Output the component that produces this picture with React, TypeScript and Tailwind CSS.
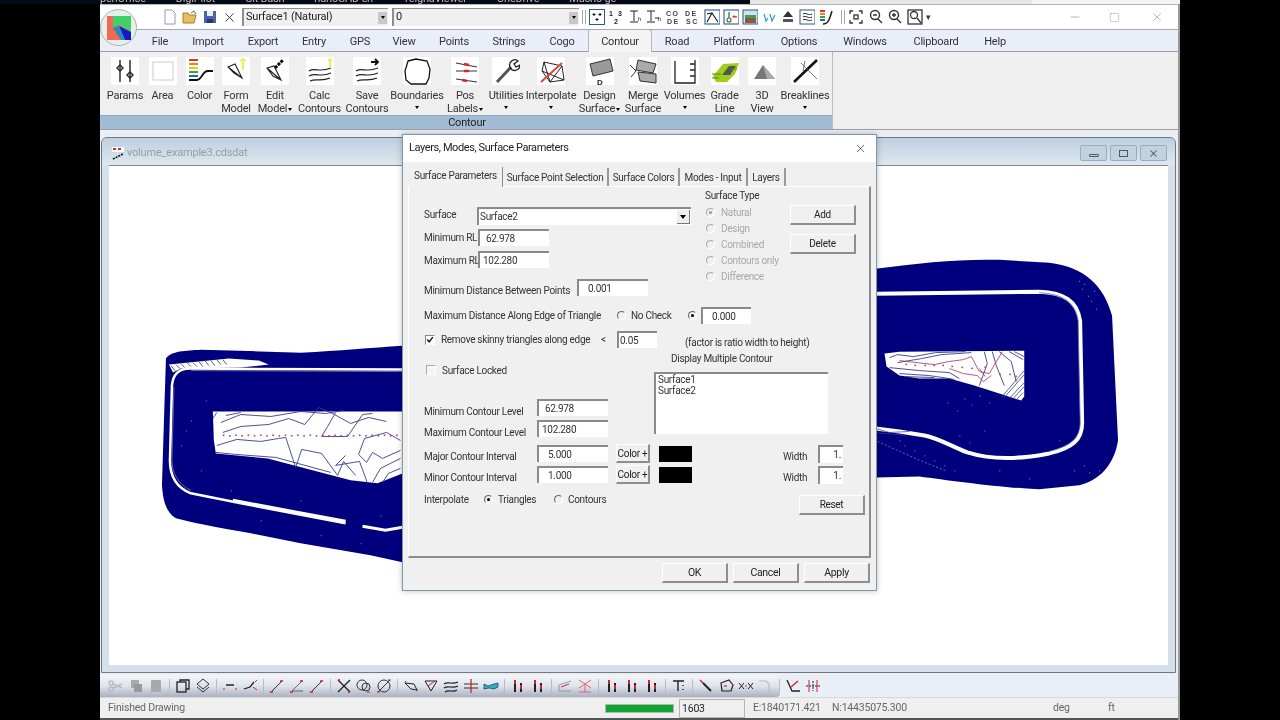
import type { ReactNode } from "react";
import { Minus, Square, X } from "lucide-react";

// ribbon icons
const ribbonIcons: Record<string, ReactNode> = {
  params: (
    <g stroke="#222" fill="none" strokeWidth="1.4">
      <path d="M9 3v22M19 3v22" />
      <path d="M9 8l3 3-3 3-3-3zM19 15l3 3-3 3-3-3z" />
    </g>
  ),
  area: <rect x="4" y="5" width="20" height="18" fill="#fff" stroke="#ccc" />,
  color: (
    <g fill="none">
      <path d="M3 3h9" stroke="#d33" strokeWidth="2" />
      <path d="M3 7h9" stroke="#e80" strokeWidth="2" />
      <path d="M3 11h9" stroke="#dc2" strokeWidth="2" />
      <path d="M3 15h9" stroke="#3a3" strokeWidth="2" />
      <path d="M3 19h9" stroke="#26c" strokeWidth="2" />
      <path d="M3 23h8c5 0 5-9 11-9h5" stroke="#111" strokeWidth="1.8" />
    </g>
  ),
  form: (
    <g fill="none">
      <path d="M6 10l7-3 7 14-8-5zM6 10l14 11" stroke="#222" strokeWidth="1.1" />
      <path d="M21 1v12M18 4l3-2 3 2" stroke="#ee6" strokeWidth="2" />
    </g>
  ),
  edit: (
    <g fill="none">
      <path d="M6 11l7-2 7 14-8-4zM6 11l14 12" stroke="#222" strokeWidth="1.1" />
      <path d="M14 11l8-8" stroke="#111" strokeWidth="3" strokeDasharray="3 1" />
    </g>
  ),
  calc: (
    <g fill="none" stroke="#222" strokeWidth="1.2">
      <path d="M3 14c6-4 10 2 22-3M3 19c7-4 11 2 22-3M4 24c6-3 11 1 20-3" />
      <path d="M24 2v9M22 4l2-2 2 2" stroke="#ee6" strokeWidth="2" />
    </g>
  ),
  save: (
    <g fill="none" stroke="#222" strokeWidth="1.2">
      <path d="M3 14c6-4 10 2 22-3M3 19c7-4 11 2 22-3M4 24c6-3 11 1 20-3" />
      <path d="M18 5h7M22 2l3 3-3 3" stroke="#111" strokeWidth="1.8" />
    </g>
  ),
  boundaries: (
    <path
      d="M5 4l8-2 11 2 3 8-1 9-3 6H8l-5-4-1-9z"
      fill="none"
      stroke="#111"
      strokeWidth="1.3"
    />
  ),
  pos: (
    <g fill="none" stroke="#333" strokeWidth="1.1">
      <path d="M5 6l21 4M5 14l21 0M5 22l21 3" />
      <path d="M13 7l5 1M13 14h5M11 23l5 1" stroke="#d22" strokeWidth="2.6" />
    </g>
  ),
  utilities: (
    <g fill="none">
      <path d="M5 25L19 10" stroke="#555" strokeWidth="3" />
      <path d="M18 10c-2-6 5-9 8-6l-4 3 2 3 4-2c0 5-6 7-9 4z" stroke="#222" strokeWidth="1.3" />
    </g>
  ),
  interpolate: (
    <g fill="none">
      <path d="M7 5l18 4 2 14-14 2-8-11zM7 5l6 20M5 14l22 9M25 9L13 25" stroke="#222" strokeWidth="1" />
      <path d="M4 25L25 6" stroke="#d44" strokeWidth="2" />
    </g>
  ),
  design: (
    <g>
      <path d="M4 7l20-5 3 12-20 5z" fill="#999" stroke="#333" />
      <text x="11" y="28" fontSize="8" fontWeight="700" fill="#222" fontFamily="Liberation Sans">D</text>
    </g>
  ),
  merge: (
    <g fill="#aaa" stroke="#333">
      <path d="M9 3l18 4-3 9-17-3z" />
      <path d="M9 15l18 2 0 9-16-2z" />
      <path d="M1 8l6 6-5 6" fill="none" />
    </g>
  ),
  volumes: <path d="M4 4v22h20V3M24 7h-5M24 13h-5M24 19h-5" fill="none" stroke="#222" strokeWidth="1.3" />,
  grade: (
    <g>
      <path d="M2 19l10-12 16-1-4 11-8 8H5z" fill="#9bcf1b" />
      <path d="M11 18l7-9h7l-6 9z" fill="#555" />
      <path d="M1 17h9M1 21h7M20 12h6" stroke="#5a8a10" />
    </g>
  ),
  view3d: (
    <g>
      <path d="M6 22l9-14 12 14z" fill="#777" />
      <path d="M15 8l4 14h8z" fill="#aaa" />
    </g>
  ),
  breaklines: (
    <g fill="none">
      <path d="M3 25L26 3" stroke="#111" strokeWidth="2.6" />
      <path d="M10 6l16 16M14 4l-2 10" stroke="#555" strokeWidth="0.8" />
    </g>
  ),
};

const ribbonTools = [
  { w: 38, icon: "params", lines: ["Params"] },
  { w: 37, icon: "area", lines: ["Area"] },
  { w: 37, icon: "color", lines: ["Color"] },
  { w: 36, icon: "form", lines: ["Form", "Model"] },
  { w: 42, icon: "edit", lines: ["Edit", "Model"], caret: "inline" },
  { w: 47, icon: "calc", lines: ["Calc", "Contours"] },
  { w: 48, icon: "save", lines: ["Save", "Contours"] },
  { w: 52, icon: "boundaries", lines: ["Boundaries"], caret: "below" },
  { w: 44, icon: "pos", lines: ["Pos", "Labels"], caret: "inline" },
  { w: 38, icon: "utilities", lines: ["Utilities"], caret: "below" },
  { w: 52, icon: "interpolate", lines: ["Interpolate"], caret: "below" },
  { w: 45, icon: "design", lines: ["Design", "Surface"], caret: "inline" },
  { w: 42, icon: "merge", lines: ["Merge", "Surface"] },
  { w: 41, icon: "volumes", lines: ["Volumes"], caret: "below" },
  { w: 39, icon: "grade", lines: ["Grade", "Line"] },
  { w: 36, icon: "view3d", lines: ["3D", "View"] },
  { w: 50, icon: "breaklines", lines: ["Breaklines"], caret: "below" },
];

const menuItems: [string, number][] = [
  ["File", 40], ["Import", 56], ["Export", 54], ["Entry", 48], ["GPS", 44], ["View", 44],
  ["Points", 56], ["Strings", 54], ["Cogo", 52], ["Contour", 64], ["Road", 50], ["Platform", 64],
  ["Options", 66], ["Windows", 66], ["Clipboard", 76], ["Help", 42],
];

function Caret() {
  return <span className="inline-block w-0 h-0 border-x-[2.5px] border-x-transparent border-t-[3px] border-t-black align-middle" />;
}

function RibbonTool({ tool }: { tool: (typeof ribbonTools)[number] }) {
  return (
    <div className="flex flex-col items-center shrink-0" style={{ width: tool.w }}>
      <div className="w-[28px] h-[28px] bg-white mt-[5px] shrink-0">
        <svg viewBox="0 0 28 28" className="w-[28px] h-[28px]">
          {ribbonIcons[tool.icon]}
        </svg>
      </div>
      <div className="mt-[4px] text-[11px] leading-[13px] text-[#333] text-center whitespace-nowrap">
        {tool.lines.map((l, i) => (
          <div key={l}>
            {l}
            {tool.caret === "inline" && i === tool.lines.length - 1 && <span className="ml-[1px]"><Caret /></span>}
          </div>
        ))}
        {tool.caret === "below" && <div className="h-[13px] leading-[10px]"><Caret /></div>}
      </div>
    </div>
  );
}

// little bevelled field, the way the old dialog draws its edits
function Field({ w, h = 17, children, className = "" }: { w: number; h?: number; children?: ReactNode; className?: string }) {
  return (
    <div
      className={`bg-white border-t-2 border-l-2 border-t-[#8a8a8a] border-l-[#8a8a8a] text-[#333] text-[10px] leading-none flex items-center shrink-0 ${className}`}
      style={{ width: w, height: h }}
    >
      {children}
    </div>
  );
}

function Btn({ w, h = 20, children, className = "" }: { w: number; h?: number; children: ReactNode; className?: string }) {
  return (
    <div
      className={`bg-[#f0f0f0] border-r-2 border-b-2 border-r-[#8e8e8e] border-b-[#8e8e8e] border-t border-l border-t-white border-l-white text-[#222] text-[10px] whitespace-nowrap flex items-center justify-center shrink-0 ${className}`}
      style={{ width: w, height: h }}
    >
      {children}
    </div>
  );
}

function Radio({ on, disabled }: { on?: boolean; disabled?: boolean }) {
  return (
    <span
      className={`inline-flex items-center justify-center w-[9px] h-[9px] rounded-full border border-b-white border-r-white shrink-0 ${disabled ? "border-[#aaa] border-b-white border-r-white" : "border-[#666] border-b-white border-r-white"}`}
    >
      {on && <span className={`w-[3px] h-[3px] rounded-full ${disabled ? "bg-[#999]" : "bg-black"}`} />}
    </span>
  );
}

function Label({ w, children, className = "" }: { w?: number; children: ReactNode; className?: string }) {
  return (
    <span className={`text-[10px] text-[#333] whitespace-nowrap shrink-0 ${className}`} style={w ? { width: w } : undefined}>
      {children}
    </span>
  );
}

function LayersDialog() {
  return (
    <div className="absolute left-[402px] top-[134px] w-[475px] h-[457px] border border-[#7f98a8] bg-[#f0f0f0] flex flex-col shadow-[0_0_6px_rgba(0,0,0,0.25)] z-10 tracking-[-0.3px]">
      <div className="h-[27px] shrink-0 bg-white flex items-center justify-between pl-[6px] pr-[9px]">
        <span className="text-[11px] text-[#222] tracking-[-0.4px]">Layers, Modes, Surface Parameters</span>
        <X size={13} strokeWidth={1.2} className="text-[#222]" />
      </div>

      {/* tab strip */}
      <div className="h-[24px] shrink-0 flex items-end pl-[6px] text-[10px] text-[#333] whitespace-nowrap">
        <div className="w-[94px] h-[20px] mb-[-1px] pb-[3px] flex items-center justify-center bg-[#f0f0f0] border-r border-[#888] z-10">Surface Parameters</div>
        <div className="w-[106px] h-[18px] flex items-center justify-center border-r-2 border-[#999]">Surface Point Selection</div>
        <div className="w-[71px] h-[18px] flex items-center justify-center border-r-2 border-[#999]">Surface Colors</div>
        <div className="w-[68px] h-[18px] flex items-center justify-center border-r-2 border-[#999]">Modes - Input</div>
        <div className="w-[38px] h-[18px] flex items-center justify-center border-r-2 border-[#999]">Layers</div>
      </div>

      {/* tab page */}
      <div className="ml-[5px] w-[463px] h-[372px] shrink-0 border-r-2 border-b-2 border-[#8c8c8c] border-t border-t-white border-l border-l-white pl-[15px] relative">
        <div className="flex h-[89px]">
          <div className="w-[281px] flex flex-col shrink-0">
            <div className="flex items-center h-[18px] mt-[20px]">
              <Label w={53} className="mb-[4px]">Surface</Label>
              <Field w={214} h={18} className="justify-between pl-[1px] pr-[1px]">
                Surface2
                <span className="w-[13px] h-[14px] bg-[#eee] border-r border-b border-[#777] flex items-center justify-center">
                  <span className="w-0 h-0 border-x-[3.5px] border-x-transparent border-t-[4px] border-t-black" />
                </span>
              </Field>
            </div>
            <div className="flex items-center h-[17px] mt-[4px]">
              <Label w={54}>Minimum RL</Label>
              <Field w={71} className="pl-[6px]">62.978</Field>
            </div>
            <div className="flex items-center h-[17px] mt-[5px]">
              <Label w={54} className="mt-[2px]">Maximum RL</Label>
              <Field w={71} className="pl-[3px]">102.280</Field>
            </div>
          </div>
          <div className="w-[85px] shrink-0 flex flex-col">
            <Label className="h-[16px] leading-[16px] mt-[1px]">Surface Type</Label>
            <div className="flex flex-col mt-[1px]">
              {["Natural", "Design", "Combined", "Contours only", "Difference"].map((s, i) => (
                <div key={s} className="flex items-center gap-[6px] h-[15.8px] pl-[1px]">
                  <Radio on={i === 0} disabled />
                  <span className="text-[10px] text-[#a8a8a8] whitespace-nowrap">{s}</span>
                </div>
              ))}
            </div>
          </div>
          <div className="flex flex-col gap-[9px] mt-[18px]">
            <Btn w={66}>Add</Btn>
            <Btn w={66}>Delete</Btn>
          </div>
        </div>

        <div className="flex items-center h-[17px] mt-[3px]">
          <Label w={153} className="mt-[6px]">Minimum Distance Between Points</Label>
          <Field w={71} className="pl-[9px]">0.001</Field>
        </div>

        <div className="flex items-center h-[17px] mt-[11px]">
          <Label w={193}>Maximum Distance Along Edge of Triangle</Label>
          <Radio />
          <Label className="ml-[5px] w-[57px]">No Check</Label>
          <Radio on />
          <Field w={50} className="ml-[4px] pl-[9px]">0.000</Field>
        </div>

        <div className="flex items-center h-[17px] mt-[7px]">
          <span className="w-[10px] h-[10px] bg-white border border-[#888] border-b-white border-r-white flex items-center justify-center shrink-0 ml-[1px] mr-[6px]">
            <svg viewBox="0 0 10 10" className="w-[9px] h-[9px]"><path d="M1.5 5l2.5 3 4.5-6" fill="none" stroke="#111" strokeWidth="1.8" /></svg>
          </span>
          <Label w={160}>Remove skinny triangles along edge</Label>
          <Label w={16}>&lt;</Label>
          <Field w={40} className="pl-[1px]">0.05</Field>
          <Label className="ml-[28px] mt-[6px]">(factor is ratio width to height)</Label>
        </div>

        <div className="flex h-[94px] mt-[3px]">
          <div className="w-[230px] shrink-0 flex flex-col">
            <div className="flex items-center h-[14px] mt-[12px]">
              <span className="w-[10px] h-[10px] bg-[#f6f6f6] border border-[#aaa] border-b-white border-r-white shrink-0 ml-[2px] mr-[6px]" />
              <Label>Surface Locked</Label>
            </div>
            <div className="flex items-center h-[17px] mt-[22px]">
              <Label w={113} className="mt-[8px]">Minimum Contour Level</Label>
              <Field w={71} className="pl-[6px]">62.978</Field>
            </div>
            <div className="flex items-center h-[17px] mt-[4px]">
              <Label w={113} className="mt-[8px]">Maximum Contour Level</Label>
              <Field w={71} className="pl-[3px]">102.280</Field>
            </div>
          </div>
          <div className="flex flex-col">
            <div className="h-[14px] leading-[14px] text-[10px] text-[#333] pl-[17px] mt-[1px] mb-[6px] whitespace-nowrap">Display Multiple Contour</div>
            <div className="w-[174px] h-[62px] bg-white border-t-2 border-l-2 border-[#8a8a8a] pl-[2px] text-[10px] leading-[11px] text-[#333]">
              <div>Surface1</div>
              <div>Surface2</div>
            </div>
          </div>
        </div>

        <div className="flex items-center h-[19px] mt-[-1px]">
          <Label w={113} className="mt-[6px]">Major Contour Interval</Label>
          <Field w={71} className="pl-[9px]">5.000</Field>
          <Btn w={34} h={19} className="ml-[8px]">Color +</Btn>
          <div className="w-[33px] h-[16px] bg-black ml-[9px] shrink-0" />
          <Label w={35} className="ml-[91px] mt-[6px]">Width</Label>
          <Field w={25} h={18} className="justify-end pr-[2px]">1.</Field>
        </div>
        <div className="flex items-center h-[19px] mt-[2px]">
          <Label w={113} className="mt-[6px]">Minor Contour Interval</Label>
          <Field w={71} className="pl-[9px]">1.000</Field>
          <Btn w={34} h={19} className="ml-[8px]">Color +</Btn>
          <div className="w-[33px] h-[16px] bg-black ml-[9px] shrink-0" />
          <Label w={35} className="ml-[91px] mt-[6px]">Width</Label>
          <Field w={25} h={18} className="justify-end pr-[2px]">1.</Field>
        </div>

        <div className="flex items-center h-[20px] mt-[5px]">
          <Label w={60}>Interpolate</Label>
          <Radio on />
          <Label w={56} className="ml-[5px]">Triangles</Label>
          <Radio />
          <Label w={231} className="ml-[5px]">Contours</Label>
          <Btn w={66} className="mt-[11px]">Reset</Btn>
        </div>
      </div>

      <div className="flex justify-end gap-[5px] pr-[6px] mt-[5px]">
        <Btn w={66}><span className="text-[10.5px]">OK</span></Btn>
        <Btn w={66}><span className="text-[10.5px]">Cancel</span></Btn>
        <Btn w={66}><span className="text-[10.5px]">Apply</span></Btn>
      </div>
    </div>
  );
}

// the two surfaces, drawn in screen coordinates
function SurfaceDrawing() {
  const redLeft = Array.from({ length: 30 }, (_, i) => [222 + i * 6.2, 434 + (i % 2) * 0.6]);
  const redRight = [[906, 363], [915, 364], [925, 364], [934, 364], [943, 364], [952, 365], [962, 366], [972, 367], [985, 366], [1000, 373], [1010, 373], [1016, 375]];
  const speckles = [
    [1085, 283], [1083, 288], [1089, 295], [1092, 300], [1080, 280], [1097, 308], [1095, 290], [1100, 470], [1090, 472], [1085, 465],
    [980, 395], [965, 398], [972, 404], [958, 410], [990, 402], [948, 402], [985, 430], [960, 435], [970, 442], [1060, 440],
    [900, 440], [905, 445], [915, 450], [925, 455], [935, 460], [945, 465], [955, 470], [1000, 470], [1030, 478], [1075, 470],
    [205, 400], [190, 420], [200, 470], [230, 490], [180, 445], [185, 430], [260, 520], [320, 535], [360, 543], [300, 500], [380, 515],
  ];
  return (
    <svg viewBox="109 165 1059 500" className="w-full h-full block">
      {/* left */}
      <path
        d="M165 358C170 350 185 350 200 349L300 352C340 350 370 347 402 345L402 562L370 555L300 543L250 533C215 527 190 522 175 518C165 512 162 500 161 485L163 420Z"
        fill="#00007e"
      />
      <path d="M168 364L228 358L258 360L268 364L240 367L180 368L172 372Z" fill="#fff" />
      <g fill="none" stroke="#334" strokeWidth="0.8">
        <path d="M170 365l4 5M175 364l4 4M180 363l4 4M186 362l4 4M192 362l4 4M198 361l4 5M204 360l4 5M210 360l4 5M216 359l4 5M222 359l4 5" />
      </g>
      <path d="M190 368L402 369" stroke="#fff" strokeWidth="2.5" fill="none" />
      <path d="M190 368C176 368 172 375 171 385L169 460C169 475 175 487 190 493L240 503L345 523" stroke="#fff" strokeWidth="2.5" fill="none" />
      <path d="M232 500L345 521" stroke="#fff" strokeWidth="3" fill="none" />
      <path d="M362 526L385 530L402 527" stroke="#fff" strokeWidth="3" fill="none" />
      <path d="M190 370L402 371M173 386L171 460C171 472 177 484 190 490" stroke="#7d7db8" strokeWidth="0.8" fill="none" />
      <path d="M212 411H402V473L377 483L350 480L267 458L215 453L213 440Z" fill="#fff" />
      <g fill="none" stroke="#3a3a8a" strokeWidth="0.9">
        <path d="M216 412l-4 6M225 415l15-3M220 422l20-8 30 2 30-5 25 2 18-3M222 432l18-6 28-2 20-6 16 6 14-17 14 6 18 10 18-6 18 4" />
        <path d="M216 445l20-6 24 2 18-3 7-1 10 30 6-18 20 4 16 22 6-14 12 14" />
        <path d="M215 452l20 2 40 3 55 15" />
        <path d="M335 412l-8 14-6 10 26 0 15-22 10-1" />
        <path d="M400 440l-14-8-22 6-6 16 8 8 6-10 10 6 18-8" />
        <path d="M345 455l-10 10 24 -4 8 22M400 458l-20 10-8 14M400 468l-12 5-6 9" />
      </g>
      <g fill="#b04060">
        {redLeft.map(([x, y]) => (
          <rect key={x} x={x} y={y} width="1.6" height="1.6" />
        ))}
      </g>

      {/* right */}
      <path
        d="M876 268C920 262 960 258 1000 259L1050 262C1085 266 1105 285 1113 315L1119 440C1115 465 1100 480 1080 485L1040 489C1000 487 950 480 920 476L876 477Z"
        fill="#00007e"
      />
      <path
        d="M876 293L960 292L1040 291C1065 292 1078 300 1081 320L1083 420C1084 440 1072 448 1050 453C1020 459 990 459 968 452C950 445 940 438 925 435L900 431L876 428"
        fill="none"
        stroke="#fff"
        strokeWidth="4"
      />
      <path
        d="M1040 292C1063 293 1076 301 1079 320L1081 420C1082 438 1070 446 1050 451"
        fill="none"
        stroke="#6a6ab0"
        strokeWidth="0.8"
      />
      <path d="M885 353l15-2 125-1v46l-3 4-22-7-25-8-25-7-30 0-20-3-13-9z" fill="#fff" />
      <g fill="none" stroke="#3a3a8a" strokeWidth="0.9">
        <path d="M890 357l8-3 16 2 22-4 30-1M898 362l24-4 20-4 30-2" />
        <path d="M890 367l30 3 30 2 10 6M900 373l30 2 20 3 5 1M905 376l30 1" />
        <path d="M985 351l3 12-8 22M993 351l4 14 8 20M1000 351l12 10 5 20M1010 351l14 8M1015 351l10 5" />
      </g>
      <g fill="none" stroke="#a03060" strokeWidth="0.8">
        <path d="M900 360l35 4 14-3 15-2 8-3 8 15 10 2 13-22M950 368l14 5 14 2 6 6 8-6M980 368l6 8" />
      </g>
      <path d="M1025 382l-15 16M1025 386l-12 13M1025 374l-20 23M1025 370l-23 27M1024 392l-7 7" stroke="#3a3a8a" strokeWidth="0.8" />
      <path d="M876 428l14 4 20-1M876 432l30 3" stroke="#3a3a8a" fill="none" strokeWidth="0.7" />
      <path d="M878 441l40 18 30 12" stroke="#8080c8" strokeWidth="0.8" strokeDasharray="2 2" fill="none" />
      <g fill="#b04060">
        {redRight.map(([x, y]) => (
          <rect key={x} x={x} y={y} width="1.6" height="1.6" />
        ))}
      </g>
      <g fill="#8a8ad0">
        {speckles.map(([x, y]) => (
          <rect key={`${x}-${y}`} x={x} y={y} width="1" height="1" />
        ))}
      </g>
    </svg>
  );
}

const topIcons: ReactNode[] = [
  <g fill="none"><rect x="0.5" y="0.5" width="15" height="15" stroke="#2b5a86" /><path d="M5 4v3M3.5 5.5h3M11 4v3M9.5 5.5h3M8 9v3M6.5 10.5h3" stroke="#111" /></g>,
  <g fill="#222"><text x="1" y="7" fontSize="7" fontFamily="Liberation Sans" fontWeight="700">1</text><text x="10" y="7" fontSize="7" fontFamily="Liberation Sans" fontWeight="700">3</text><text x="6" y="15" fontSize="7" fontFamily="Liberation Sans" fontWeight="700">2</text></g>,
  <g fill="none" stroke="#222"><path d="M3 2h8M7 2v10M3 13h8" /><text x="11" y="12" fontSize="6" fill="#222" stroke="none" fontFamily="Liberation Sans">h</text></g>,
  <g fill="none" stroke="#222"><path d="M1 2h8M5 2v10M1 13h8M9 9h4" /><text x="12" y="12" fontSize="6" fill="#222" stroke="none" fontFamily="Liberation Sans">h</text></g>,
  <g fill="#444" fontFamily="Liberation Sans" fontSize="7" fontWeight="700"><text x="1" y="7">C O</text><text x="2" y="15">D E</text></g>,
  <g fill="#444" fontFamily="Liberation Sans" fontSize="7" fontWeight="700"><text x="1" y="7">D E</text><text x="2" y="15">S C</text></g>,
  <g fill="none" stroke="#2b5a86" strokeWidth="1.1"><rect x="1" y="1" width="15" height="14" /><path d="M3 13l5-9 6 9M3 5l5-1" stroke="#111" /></g>,
  <g fill="none" stroke="#2b5a86" strokeWidth="1.1"><rect x="1" y="1" width="15" height="14" /><circle cx="6" cy="11" r="2" stroke="#555" /><path d="M6 9V3" stroke="#393" strokeWidth="1.5" /><path d="M11 7l3 1h-4z" stroke="#d33" /></g>,
  <g><rect x="1" y="1" width="15" height="14" fill="#cfe3ef" stroke="#2b5a86" /><rect x="3" y="9" width="11" height="5" fill="#8a5a3a" /><rect x="3" y="6" width="11" height="3" fill="#4a9a5a" /></g>,
  <g fill="none" stroke="#2aa0b8" strokeWidth="1.2"><path d="M3 5l2 7 2-3M9 5l2 7 3-6" /></g>,
  <g fill="#333"><path d="M8 2l5 6H3z" /><path d="M3 10h10v3H3z" fill="#555" /></g>,
  <g fill="none" stroke="#2b5a86"><rect x="1" y="1" width="15" height="14" /><path d="M4 5c3-2 5 2 9 0M4 8c3-2 5 2 9 0M4 11c3-2 5 2 9 0" stroke="#222" /></g>,
  <g fill="none"><path d="M2 2h5" stroke="#d33" strokeWidth="2" /><path d="M2 5h5" stroke="#e80" strokeWidth="2" /><path d="M2 8h5" stroke="#3a3" strokeWidth="2" /><path d="M2 11h5" stroke="#26c" strokeWidth="2" /><path d="M5 15c5 0 6-3 9-13" stroke="#111" strokeWidth="1.4" /></g>,
];

const zoomIcons: ReactNode[] = [
  <g fill="none" stroke="#333" strokeWidth="1.3"><path d="M2 5V2h3M11 2h3v3M14 11v3h-3M5 14H2v-3" /><rect x="6" y="6" width="4" height="4" /></g>,
  <g fill="none" stroke="#333" strokeWidth="1.4"><circle cx="7" cy="6" r="4.5" /><path d="M10 10l4 4M5 6h4" /></g>,
  <g fill="none" stroke="#333" strokeWidth="1.4"><circle cx="7" cy="6" r="4.5" /><path d="M10 10l4 4M5 6h4M7 4v4" /></g>,
  <g fill="none" stroke="#333" strokeWidth="1.3"><rect x="1" y="1" width="14" height="14" /><circle cx="7" cy="6" r="3.5" /><path d="M10 9l4 5" /></g>,
];

const Mini = ({ children }: { children: ReactNode }) => (
  <svg viewBox="0 0 16 16" className="w-[16px] h-[16px] shrink-0">{children}</svg>
);

const Sep = () => <span className="w-[1px] h-[14px] bg-[#bbb] shrink-0" />;

const R = "#c22";
const bottomIcons: Record<string, ReactNode> = {
  cut: <g fill="none" stroke="#bbb" strokeWidth="1.4"><circle cx="3" cy="5" r="2" /><circle cx="3" cy="11" r="2" /><path d="M5 6l9 4M5 10l9-4" /></g>,
  copy: <g fill="#a9a9a9"><rect x="3" y="2" width="8" height="8" /><rect x="6" y="6" width="8" height="8" fill="#999" /></g>,
  paste: <rect x="3" y="2" width="10" height="12" rx="1" fill="#a9a9a9" />,
  frame: <g fill="none" stroke="#222" strokeWidth="1.3"><rect x="2" y="4" width="9" height="10" /><path d="M5 4V2h9v9h-3" /></g>,
  diamond: <g fill="none" stroke="#333"><path d="M8 1l6 5-6 5-6-5z" /><path d="M2 9l6 5 6-5" /></g>,
  dash: <g><path d="M4 7h8" stroke="#222" strokeWidth="1.5" /><path d="M1 11h2M13 11h2" stroke={R} /></g>,
  poly: <g fill="none"><path d="M2 11l6-2 4-5" stroke="#222" strokeWidth="1.3" /><path d="M11 9l4 3M13 4l2-2" stroke={R} /></g>,
  line: <g fill="none"><path d="M3 13L13 3" stroke="#333" /><path d="M1 14h3M11 3h3" stroke={R} strokeWidth="1.5" /></g>,
  angle: <g fill="none"><path d="M3 13L13 3M3 13h11" stroke="#666" /><path d="M1 14h3M11 3h3" stroke={R} strokeWidth="1.5" /></g>,
  cross: <g fill="none"><path d="M2 2l12 12M14 2L2 14" stroke="#222" strokeWidth="1.4" /><path d="M2 2h2M12 14h2" stroke={R} strokeWidth="1.4" /></g>,
  circ: <g fill="none" stroke="#333"><circle cx="6" cy="7" r="5" /><circle cx="10" cy="9" r="4" /><path d="M11 14h3" stroke={R} /></g>,
  circ2: <g fill="none" stroke="#333"><circle cx="8" cy="8" r="6" /><path d="M2 14L14 2" /><path d="M1 14h3M12 2h3" stroke={R} /></g>,
  tri: <g fill="none" stroke="#222"><path d="M2 5l9 1 3 6-6-1z" /><path d="M2 5l1-2M13 13l2-1" stroke={R} /></g>,
  tri2: <g fill="none" stroke="#222"><path d="M2 3h12L8 13z" /><path d="M5 8l7-5" stroke={R} /></g>,
  wave: <path d="M1 6c4-3 8 1 14-2M1 10c4-3 8 1 14-2M2 14c4-3 8 1 12-2" fill="none" stroke="#222" strokeWidth="1.2" />,
  hash: <g fill="none"><path d="M1 6h14M1 10h14" stroke="#333" /><path d="M8 1v14" stroke={R} strokeWidth="1.3" /></g>,
  teal: <path d="M1 6l4 2 6-2 4-1v4l-4 2-5-1-5 1z" fill="#2ab5ba" stroke="#115" strokeWidth="0.6" />,
  pins: <g fill="none"><path d="M5 14V5" stroke="#222" strokeWidth="2" /><path d="M11 14V5" stroke="#222" strokeWidth="2" /><path d="M5 2v4M11 7v4" stroke={R} strokeWidth="2" /></g>,
  corner: <g fill="none"><path d="M2 13h12M2 13V7l12-4" stroke="#999" /><path d="M4 9l8-3" stroke={R} /></g>,
  star: <path d="M2 2l12 8M14 2L2 10M8 6v8M2 14h12" fill="none" stroke="#d66" />,
  tee: <g fill="none"><path d="M2 3h11M7 3v10" stroke="#222" strokeWidth="1.4" /><path d="M12 7v1M12 11v1" stroke="#222" strokeWidth="1.4" /></g>,
  arrowcut: <g fill="none"><path d="M5 5l8 8" stroke="#222" strokeWidth="2" /><path d="M2 2l3 3" stroke={R} strokeWidth="1.4" /></g>,
  blob: <g fill="none" stroke="#222" strokeWidth="1.2"><path d="M3 5l8-3 4 5-2 6H4z" /><path d="M6 8h3" stroke={R} /></g>,
  xs: <g fill="none" stroke="#222"><path d="M1 5l5 6M6 5l-5 6M10 5l5 6M15 5l-5 6" /><path d="M7 8h2" stroke={R} /></g>,
  step: <path d="M1 3h7l3 3v8" fill="none" stroke="#bbb" strokeWidth="1.2" />,
  slant: <g fill="none"><path d="M2 2l5 11h8" stroke="#222" strokeWidth="1.3" /><path d="M13 3L6 9" stroke={R} strokeWidth="1.3" /></g>,
  bars: <g fill="none"><path d="M4 2v12M12 2v12" stroke={R} /><path d="M8 3v10M1 8h14" stroke="#222" strokeDasharray="2 1" /></g>,
};

const bottomGroups = [
  ["cut", "copy", "paste"],
  ["frame", "diamond"],
  ["dash", "poly"],
  ["line", "angle", "line"],
  ["cross", "circ", "circ2"],
  ["tri", "tri2", "wave", "hash", "teal"],
  ["pins", "pins"],
  ["corner", "star"],
  ["pins", "pins", "pins"],
  ["tee"],
  ["arrowcut", "blob", "xs", "step"],
  ["slant", "bars"],
];

export default function App() {
  return (
    <div className="w-[1280px] h-[720px] bg-black overflow-hidden relative flex flex-col blur-[0.35px] tracking-[-0.2px] font-['Roboto','Noto_Sans',sans-serif]">
      {/* what shows of the desktop above the window */}
      <div className="h-[4px] shrink-0 flex overflow-hidden text-[11px] leading-none">
        <div className="w-[750px] bg-[#050a18] text-[#bbb] pl-[100px] flex gap-[30px] whitespace-nowrap overflow-hidden">
          <span className="-mt-[7px]">penOffice</span>
          <span className="-mt-[7px]">DigiPilot</span>
          <span className="-mt-[7px]">Git Bash</span>
          <span className="-mt-[7px]">nanoCAD en</span>
          <span className="-mt-[7px]">TeighaViewer</span>
          <span className="-mt-[7px]">OneDrive</span>
          <span className="-mt-[7px]">Mucho ge</span>
        </div>
        <div className="w-[282px] bg-[#e6e6e6]" />
        <div className="w-[148px] bg-[#f4f4f4]" />
        <div className="w-[100px] bg-black" />
      </div>

      <div className="ml-[100px] w-[1080px] h-[716px] shrink-0 bg-[#e9eef7] border-r-2 border-[#9a9a9a] flex flex-col relative">
        {/* app orb */}
        <div className="absolute left-0 top-[5px] w-[37px] h-[37px] rounded-full bg-[#e6efe9] border border-[#aab5aa] flex items-center justify-center z-10">
          <svg viewBox="0 0 24 24" className="w-[24px] h-[24px]">
            <rect width="24" height="24" fill="#ef6a55" />
            <path d="M6 0h18v16L12 9 6 12z" fill="#3fd06a" />
            <path d="M12 10l12 6v8H18z" fill="#1219c8" />
            <path d="M6 12l6-2 6 14h-4z" fill="#2b8ab8" />
          </svg>
        </div>

        {/* quick access row */}
        <div className="h-[26px] shrink-0 bg-white border-t border-[#b5b5b5] border-b border-b-[#a9a7b5] flex items-center relative">
          <div className="ml-[62px] flex items-center gap-[4px]">
            <svg viewBox="0 0 16 16" className="w-[16px] h-[16px]"><path d="M3 1h7l3 3v11H3z" fill="#fff" stroke="#99a" /></svg>
            <svg viewBox="0 0 16 16" className="w-[16px] h-[16px]"><path d="M1 4h5l1 2h7l-2 8H1z" fill="#e6bf62" stroke="#a57e25" /><path d="M9 4l3-2 2 3" fill="none" stroke="#4a7a30" /></svg>
            <svg viewBox="0 0 16 16" className="w-[16px] h-[16px]"><rect x="2" y="2" width="12" height="12" fill="#4b63a8" /><rect x="5" y="2" width="6" height="5" fill="#e8ecf5" /><rect x="5" y="10" width="6" height="4" fill="#27366b" /></svg>
            <X size={15} strokeWidth={1.6} className="text-[#444]" />
          </div>
          <div className="ml-[5px] w-[146px] h-[18px] bg-[#f0f0f0] border-l-2 border-t border-[#8e8e8e] flex items-center justify-between pl-[2px] pr-[1px] text-[11px] text-[#222]">
            Surface1 (Natural)
            <span className="w-[9px] h-[12px] bg-[#c8c8c8] flex items-center justify-center"><Caret /></span>
          </div>
          <div className="ml-[4px] w-[187px] h-[18px] bg-[#f0f0f0] border-l-2 border-t border-[#8e8e8e] flex items-center justify-between pl-[2px] pr-[1px] text-[11px] text-[#222]">
            0
            <span className="w-[9px] h-[12px] bg-[#c8c8c8] flex items-center justify-center"><Caret /></span>
          </div>
          <span className="ml-[3px] w-[4px] h-[14px] border-x border-[#aaa] shrink-0" />
          <div className="ml-[3px] flex items-center">
            <div className="flex items-center gap-[3.1px]">
              {topIcons.map((ic, i) => (
                <Mini key={i}>{ic}</Mini>
              ))}
            </div>
            <span className="ml-[7px] mr-[3px] w-[4px] h-[14px] border-x border-[#aaa] shrink-0" />
            <div className="flex items-center gap-[3.5px]">
              {zoomIcons.map((ic, i) => (
                <Mini key={i}>{ic}</Mini>
              ))}
            </div>
            <span className="ml-[3px] text-[9px] leading-none text-[#333]">▾</span>
          </div>
          <div className="absolute right-[14px] top-[5px] flex items-center text-[#888]">
            <Minus size={14} strokeWidth={1} />
            <Square size={11} strokeWidth={1} className="ml-[27px]" />
            <X size={14} strokeWidth={1} className="ml-[30px]" />
          </div>
        </div>

        {/* menu */}
        <div className="h-[22px] shrink-0 bg-[#e9eef8] border-b border-[#9a9ca6] flex pl-[40px] text-[11px] text-[#333]">
          {menuItems.map(([label, w]) => (
            <div
              key={label}
              className={`flex items-center justify-center shrink-0 pt-[3px] ${label === "Contour" ? "bg-[#f4f4f4] border border-b-0 border-[#b5b8c0] rounded-t-[3px] mt-[-1px] h-[23px]" : "h-[21px]"}`}
              style={{ width: w }}
            >
              {label}
            </div>
          ))}
        </div>

        {/* ribbon */}
        <div className="h-[78px] shrink-0 bg-[#efefef] border-b border-[#a0a0a0] flex">
          <div className="w-[733px] border-r border-[#b8bcc4] flex flex-col">
            <div className="h-[63px] flex pl-[6px] overflow-hidden">
              {ribbonTools.map((t) => (
                <RibbonTool key={t.icon} tool={t} />
              ))}
            </div>
            <div className="h-[14px] bg-[#a3bcd6] flex items-center justify-center text-[11px] text-[#222] pl-[2px] pt-[1px] border-t border-[#8fa8c4]">
              Contour
            </div>
          </div>
        </div>

        {/* document window */}
        <div className="mt-[7px] ml-[1px] w-[1075px] h-[536px] shrink-0 bg-[#d4e1ea] border border-[#777] rounded-t-[6px] flex flex-col">
          <div className="h-[27px] shrink-0 bg-gradient-to-b from-[#bccfe0] to-[#dde8ef] flex items-center justify-between pl-[9px] pr-[8px] pt-[3px] rounded-t-[6px]">
            <div className="flex items-center gap-[2px]">
              <svg viewBox="0 0 14 14" className="w-[14px] h-[14px]">
                <rect x="1" y="1" width="12" height="5" fill="#fff" />
                <rect x="2" y="2" width="3" height="2" fill="#c33" />
                <rect x="7" y="2" width="3" height="2" fill="#c33" />
                <path d="M2 13l10-5" stroke="#111" strokeWidth="1.6" strokeDasharray="2 1" />
              </svg>
              <span className="text-[11px] text-[#94a0a8]">volume_example3.cdsdat</span>
            </div>
            <div className="flex items-center gap-[3px]">
              {[
                <span key="min" className="w-[10px] h-[3px] border border-[#556] rounded-[1px] mt-[4px]" />,
                <span key="max" className="w-[9px] h-[7px] border border-[#556]" />,
                <X key="x" size={11} strokeWidth={2.2} className="text-[#556]" />,
              ].map((g, i) => (
                <span key={i} className="w-[27px] h-[16px] rounded-[2px] border border-[#98aebf] bg-[#c2d3df] flex items-center justify-center">{g}</span>
              ))}
            </div>
          </div>
          <div className="mx-[7px] h-[500px] shrink-0 bg-white border-t border-[#888]">
            <SurfaceDrawing />
          </div>
        </div>

        {/* bottom toolbar */}
        <div className="mt-[2px] h-[22px] shrink-0 flex">
          <div className="w-[680px] h-[22px] bg-gradient-to-b from-[#f3f5fa] via-[#dfe3ec] to-[#aab1c1] rounded-r-[4px] flex items-center pl-[8px] gap-[5px]">
            {bottomGroups.map((group, gi) => (
              <div key={gi} className="flex items-center gap-[5px]">
                {gi > 0 && <Sep />}
                <div className="flex items-center gap-[4px]">
                  {group.map((name, i) => (
                    <Mini key={i}>{bottomIcons[name]}</Mini>
                  ))}
                </div>
              </div>
            ))}
          </div>
        </div>

        {/* status bar */}
        <div className="h-[23px] shrink-0 bg-[#efefef] border-t border-[#d8d8d8] border-b-2 border-b-[#555] flex items-center text-[10.5px] text-[#666] relative">
          <span className="ml-[8px] w-[497px]">Finished Drawing</span>
          <div className="w-[69px] h-[9px] border border-[#b5b5b5] bg-[#0fa32f]" />
          <div className="ml-[5px] w-[66px] h-[19px] border border-[#b5b5b5] pl-[2px] leading-[17px] text-[#222]">1603</div>
          <span className="ml-[8px] w-[79px] whitespace-nowrap">E:1840171.421</span>
          <span className="w-[221px]">N:14435075.300</span>
          <span className="w-[55px]">deg</span>
          <span>ft</span>
        </div>
      </div>

      <LayersDialog />
    </div>
  );
}
